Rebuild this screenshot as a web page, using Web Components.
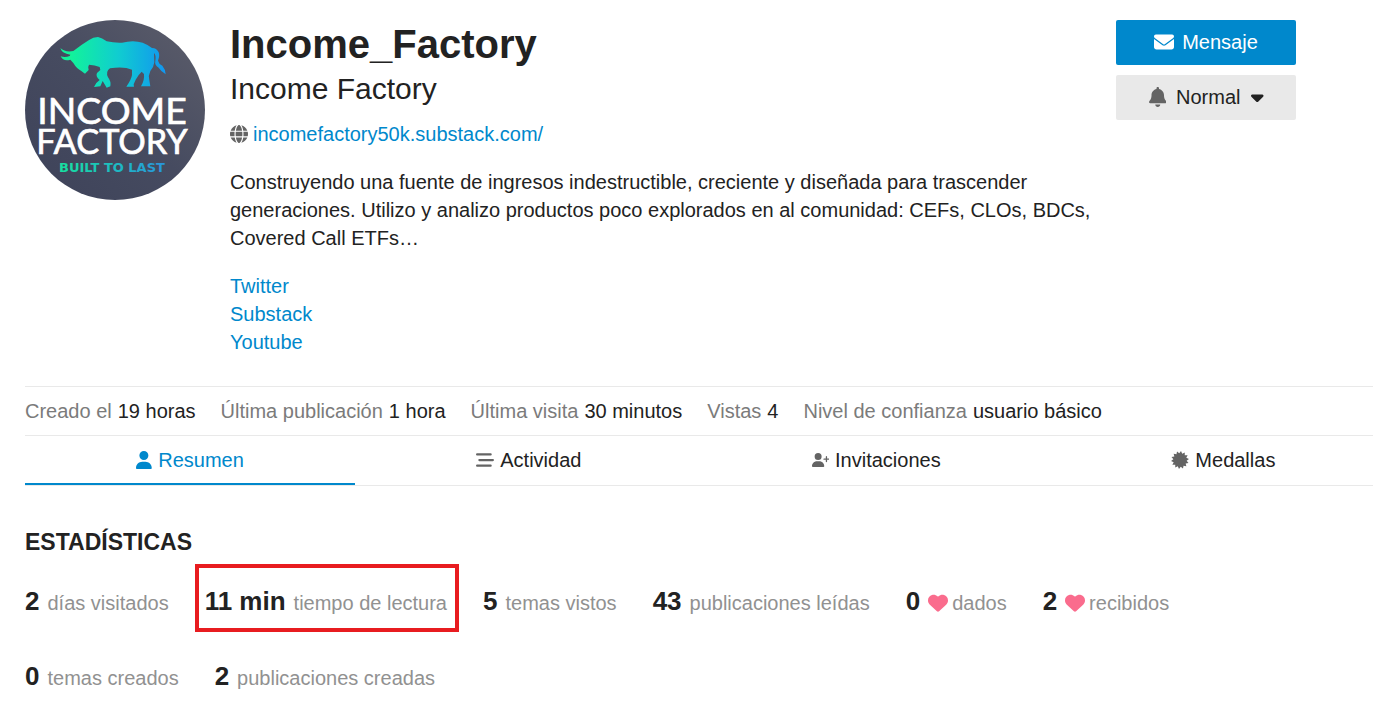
<!DOCTYPE html>
<html lang="es">
<head>
<meta charset="utf-8">
<meta name="viewport" content="width=device-width, initial-scale=1">
<title>Income_Factory - Perfil</title>
<style>
    body {
        margin: 0;
        background: #fff;
        color: #222;
        font: 20px/28px "Liberation Sans", Arial, sans-serif;
        --link: #0088cc;
        --line: #e9e9e9;
        --muted: #919191;
        --icon: #646464;
        overflow-x: hidden;
    }
</style>
</head>
<body>
<user-profile></user-profile>

<script>
// [width of the viewBox, path]
const ICONS = {
    envelope: [512, 'M48 64C21.5 64 0 85.5 0 112c0 15.1 7.1 29.3 19.2 38.4L236.8 313.6c11.4 8.5 27 8.5 38.4 0L492.8 150.4c12.1-9.1 19.2-23.3 19.2-38.4c0-26.5-21.5-48-48-48L48 64zM0 176L0 384c0 35.3 28.7 64 64 64l384 0c35.3 0 64-28.7 64-64l0-208L294.4 339.2c-22.8 17.1-54 17.1-76.8 0L0 176z'],
    bell: [448, 'M224 0c-17.7 0-32 14.3-32 32l0 19.2C119 66 64 130.6 64 208l0 18.8c0 47-17.3 92.4-48.5 127.6l-7.4 8.3c-8.4 9.4-10.4 22.9-5.3 34.4S19.4 416 32 416l384 0c12.6 0 24-7.4 29.2-18.9s3.1-25-5.3-34.4l-7.4-8.3C401.3 319.2 384 273.9 384 226.8l0-18.8c0-77.4-55-142-128-156.8L256 32c0-17.7-14.3-32-32-32zm45.3 493.3c12-12 18.7-28.3 18.7-45.3l-64 0-64 0c0 17 6.7 33.3 18.7 45.3s28.3 18.7 45.3 18.7s33.3-6.7 45.3-18.7z'],
    caret: [320, 'M137.4 374.6c12.5 12.5 32.8 12.5 45.3 0l128-128c9.2-9.2 11.9-22.9 6.9-34.9s-16.6-19.8-29.6-19.8L32 192c-12.9 0-24.6 7.8-29.6 19.8s-2.2 25.7 6.9 34.9l128 128z'],
    user: [448, 'M224 256A128 128 0 1 0 224 0a128 128 0 1 0 0 256zm-45.7 48C79.8 304 0 383.8 0 482.3C0 498.7 13.3 512 29.7 512l388.6 0c16.4 0 29.7-13.3 29.7-29.7C448 383.8 368.2 304 269.7 304l-91.4 0z'],
    'user-plus': [640, 'M96 128a128 128 0 1 1 256 0A128 128 0 1 1 96 128zM0 482.3C0 383.8 79.8 304 178.3 304l91.4 0C368.2 304 448 383.8 448 482.3c0 16.4-13.3 29.7-29.7 29.7L29.7 512C13.3 512 0 498.7 0 482.3zM504 312l0-64-64 0c-13.3 0-24-10.7-24-24s10.7-24 24-24l64 0 0-64c0-13.3 10.7-24 24-24s24 10.7 24 24l0 64 64 0c13.3 0 24 10.7 24 24s-10.7 24-24 24l-64 0 0 64c0 13.3-10.7 24-24 24s-24-10.7-24-24z'],
    stream: [512, 'M32 64h384a32 32 0 0 1 0 64H32a32 32 0 0 1 0-64zM96 224h384a32 32 0 0 1 0 64H96a32 32 0 0 1 0-64zM32 384h384a32 32 0 0 1 0 64H32a32 32 0 0 1 0-64z'],
    heart: [512, 'M47.6 300.4L228.3 469.1c7.5 7 17.4 10.9 27.7 10.9s20.2-3.9 27.7-10.9L464.4 300.4c30.4-28.3 47.6-68 47.6-109.5v-5.8c0-69.9-50.5-129.5-119.4-141C347 36.5 300.6 51.4 268 84L256 96 244 84c-32.6-32.6-79-47.5-124.6-39.9C50.5 55.6 0 115.2 0 185.1v5.8c0 41.5 17.2 81.2 47.6 109.5z'],
    globe: [512, 'M352 256c0 22.2-1.2 43.6-3.3 64l-185.3 0c-2.2-20.4-3.3-41.8-3.3-64s1.2-43.6 3.3-64l185.3 0c2.2 20.4 3.3 41.8 3.3 64zm28.8-64l123.1 0c5.3 20.5 8.1 41.9 8.1 64s-2.8 43.5-8.1 64l-123.1 0c2.1-20.6 3.2-42 3.2-64s-1.1-43.4-3.2-64zm112.6-32l-116.7 0c-10-63.9-29.8-117.4-55.3-151.6c78.3 20.7 142 77.5 171.9 151.6zm-149.1 0l-176.6 0c6.1-36.4 15.5-68.6 27-94.7c10.5-23.6 22.2-40.7 33.5-51.5C239.4 3.2 248.7 0 256 0s16.6 3.2 27.8 13.8c11.3 10.8 23 27.9 33.5 51.5c11.6 26 20.9 58.2 27 94.7zm-209 0L18.6 160C48.6 85.9 112.2 29.1 190.6 8.4C165.1 42.6 145.3 96.1 135.3 160zM8.1 192l123.1 0c-2.1 20.6-3.2 42-3.2 64s1.1 43.4 3.2 64L8.1 320C2.8 299.5 0 278.1 0 256s2.8-43.5 8.1-64zM194.7 446.6c-11.6-26-20.9-58.2-27-94.6l176.6 0c-6.1 36.4-15.5 68.6-27 94.6c-10.5 23.6-22.2 40.7-33.5 51.5C272.6 508.8 263.3 512 256 512s-16.6-3.2-27.8-13.8c-11.3-10.8-23-27.9-33.5-51.5zM135.3 352c10 63.9 29.8 117.4 55.3 151.6C112.2 482.9 48.6 426.1 18.6 352l116.7 0zm358.1 0c-30 74.1-93.6 130.9-171.9 151.6c25.5-34.2 45.2-87.7 55.3-151.6l116.7 0z'],
    certificate: [512, burst(14, 256, 190)]
};

// toothed disc for the badges icon
function burst(teeth, outer, inner) {
    let d = '';
    for (let i = 0; i < teeth * 2; i++) {
        const r = i % 2 ? inner : outer;
        const a = Math.PI * (i + 0.5) / teeth;
        d += (i ? 'L' : 'M') + (256 + r * Math.sin(a)).toFixed(1) + ' ' + (256 - r * Math.cos(a)).toFixed(1);
    }
    return d + 'z';
}

class DIcon extends HTMLElement {
    constructor() {
        super();
        this.attachShadow({ mode: 'open' });
    }

    connectedCallback() {
        const [width, path] = ICONS[this.getAttribute('name')];
        this.shadowRoot.innerHTML = `
            <style>
                :host { display: inline-flex; flex: none; }
                svg { display: block; height: var(--size, 18px); fill: currentColor; }
            </style>
            <svg viewBox="0 0 ${width} 512" aria-hidden="true"><path d="${path}"/></svg>
        `;
    }
}

class UserAvatar extends HTMLElement {
    constructor() {
        super();
        this.attachShadow({ mode: 'open' });
        this.shadowRoot.innerHTML = `
            <style>
                :host { display: block; flex: none; width: 180px; height: 180px; border-radius: 50%; overflow: hidden; }
                svg { display: block; width: 100%; height: 100%; }
                text { font-family: Lato, sans-serif; text-anchor: middle; }
                .name { fill: #fff; stroke: #fff; stroke-width: 2px; font-size: 112px; }
                .small { font-size: 103px; }
                .tag { fill: url(#tag); font: bold 39px "DejaVu Sans", sans-serif; }
            </style>
            <svg viewBox="15 15 540 540" role="img" aria-label="Income Factory">
                <defs>
                    <linearGradient id="back" x1="0" y1="1" x2="1" y2="0">
                        <stop offset="0" stop-color="#3d4259"/>
                        <stop offset=".5" stop-color="#464b60"/>
                        <stop offset="1" stop-color="#5d5e6b"/>
                    </linearGradient>
                    <linearGradient id="bull" gradientUnits="userSpaceOnUse" x1="120" y1="0" x2="436" y2="0">
                        <stop offset=".1" stop-color="#12f39a"/>
                        <stop offset=".55" stop-color="#10cdd0"/>
                        <stop offset="1" stop-color="#1296ef"/>
                    </linearGradient>
                    <linearGradient id="tag" gradientUnits="userSpaceOnUse" x1="95" y1="0" x2="455" y2="0">
                        <stop offset="0" stop-color="#16e69a"/>
                        <stop offset=".5" stop-color="#1cbdc0"/>
                        <stop offset="1" stop-color="#2b8fe0"/>
                    </linearGradient>
                </defs>
                <rect x="15" y="15" width="540" height="540" fill="url(#back)"/>
                <path fill="url(#bull)" d="M121 99Q136 113 160 108Q182 91 206 76Q220 66 234 66Q246 69 260 79Q282 84 306 83Q340 74 368 83Q386 90 396 99Q410 99 416 112Q420 122 414 137Q416 146 427 152Q436 162 437 178Q424 170 416 158Q403 150 406 138Q409 120 402 114L403 142Q401 158 391 168Q384 182 388 196L391 214H363Q374 196 372 177L365 170Q354 180 347 194L341 208L342 215H319Q334 194 336 180L336 164Q312 154 270 160Q256 170 264 187Q274 200 271 214L260 218L248 198L241 214L222 216Q228 202 239 195Q226 184 231 174L241 165L239 156Q225 150 207 149Q202 157 206 165L195 176L184 168Q170 161 160 144L151 134Q130 140 122 124Q136 128 149 123L151 119Q126 116 121 99Z"/>
                <text class="name"><tspan x="276" y="327">INCOME</tspan><tspan class="small" x="276" y="417">FACTORY</tspan></text>
                <text class="tag" x="276" y="471">BUILT TO LAST</text>
            </svg>
        `;
    }
}

class ProfileControls extends HTMLElement {
    constructor() {
        super();
        this.attachShadow({ mode: 'open' });
        this.shadowRoot.innerHTML = `
            <style>
                :host { display: flex; flex-direction: column; flex: none; gap: 10px; width: 180px; --size: 20px; }
                button, label {
                    display: flex;
                    align-items: center;
                    justify-content: center;
                    height: 45px;
                    box-sizing: border-box;
                    padding: 0 0 2px;
                    border: none;
                    border-radius: 2px;
                    cursor: pointer;
                    font: inherit;
                }
                button { gap: 8px; background: var(--link); color: #fff; }
                label { gap: 10px; background: #e9e9e9; }
                select {
                    appearance: none;
                    border: none;
                    padding: 0;
                    background: none;
                    color: inherit;
                    font: inherit;
                }
                .bell { color: var(--icon); }
            </style>
            <button type="button"><d-icon name="envelope"></d-icon>Mensaje</button>
            <label>
                <d-icon class="bell" name="bell"></d-icon>
                <select aria-label="Notificaciones"><option>Normal</option></select>
                <d-icon name="caret"></d-icon>
            </label>
        `;
    }
}

class ProfileHeader extends HTMLElement {
    constructor() {
        super();
        this.attachShadow({ mode: 'open' });
        this.shadowRoot.innerHTML = `
            <style>
                :host { display: flex; align-items: flex-start; padding: 20px 77px 30px 0; }
                .text { flex: 1; min-width: 0; padding: 0 20px 0 25px; }
                h1 { margin: 0; font-size: 40px; line-height: 48px; }
                h2 { margin: 0 0 10px; font-size: 30px; font-weight: normal; line-height: 42px; }
                p { margin: 20px 0 0; }
                a { color: var(--link); text-decoration: none; }
                .site { display: flex; align-items: center; gap: 5px; }
                .site d-icon { color: var(--icon); }
                .links { display: flex; flex-direction: column; align-items: flex-start; }
            </style>
            <user-avatar></user-avatar>
            <div class="text">
                <h1>Income_Factory</h1>
                <h2>Income Factory</h2>
                <div class="site"><d-icon name="globe"></d-icon><a href="#web">incomefactory50k.substack.com/</a></div>
                <p>Construyendo una fuente de ingresos indestructible, creciente y diseñada para trascender generaciones. Utilizo y analizo productos poco explorados en al comunidad: CEFs, CLOs, BDCs, Covered Call ETFs…</p>
                <p class="links">
                    <a href="#twitter">Twitter</a>
                    <a href="#substack">Substack</a>
                    <a href="#youtube">Youtube</a>
                </p>
            </div>
            <profile-controls></profile-controls>
        `;
    }
}

class ProfileDetails extends HTMLElement {
    constructor() {
        super();
        this.attachShadow({ mode: 'open' });
        this.shadowRoot.innerHTML = `
            <style>
                :host { display: block; border: solid var(--line); border-width: 1px 0; }
                dl { display: flex; flex-wrap: wrap; gap: 0 25px; margin: 0; padding: 10px 0; }
                div { display: flex; gap: 6px; }
                dt { color: #7b7b7b; }
                dd { margin: 0; }
            </style>
            <dl>
                <div><dt>Creado el</dt><dd>19 horas</dd></div>
                <div><dt>Última publicación</dt><dd>1 hora</dd></div>
                <div><dt>Última visita</dt><dd>30 minutos</dd></div>
                <div><dt>Vistas</dt><dd>4</dd></div>
                <div><dt>Nivel de confianza</dt><dd>usuario básico</dd></div>
            </dl>
        `;
    }
}

class ProfileTabs extends HTMLElement {
    constructor() {
        super();
        this.attachShadow({ mode: 'open' });
        this.shadowRoot.innerHTML = `
            <style>
                :host { display: block; border-bottom: 1px solid var(--line); }
                /* the last tab runs on past the page edge */
                nav { display: grid; grid-template-columns: 330fr 347fr 347fr 347fr; margin-right: -24px; }
                a {
                    display: flex;
                    align-items: center;
                    justify-content: center;
                    gap: 6px;
                    padding: 10px 0 9px;
                    border-bottom: 2px solid transparent;
                    color: inherit;
                    text-decoration: none;
                }
                d-icon { color: var(--icon); }
                d-icon[name="user-plus"] { --size: 14px; }
                a[aria-current] { color: var(--link); border-color: var(--link); }
                a[aria-current] d-icon { color: inherit; }
            </style>
            <nav>
                <a href="#resumen" aria-current="page"><d-icon name="user"></d-icon>Resumen</a>
                <a href="#actividad"><d-icon name="stream"></d-icon>Actividad</a>
                <a href="#invitaciones"><d-icon name="user-plus"></d-icon>Invitaciones</a>
                <a href="#medallas"><d-icon name="certificate"></d-icon>Medallas</a>
            </nav>
        `;
    }
}

class UserStat extends HTMLElement {
    constructor() {
        super();
        this.attachShadow({ mode: 'open' });
    }

    connectedCallback() {
        const heart = this.hasAttribute('heart') ? '<d-icon name="heart"></d-icon>' : '';
        this.shadowRoot.innerHTML = `
            <style>
                :host { display: flex; align-items: baseline; gap: 8px; position: relative; line-height: 39px; }
                .value { font-size: 26px; font-weight: bold; }
                .label { display: flex; align-items: baseline; gap: 4px; color: var(--muted); line-height: 28px; }
                d-icon { align-self: center; color: #fa6c8d; --size: 20px; }
                :host([marked])::after {
                    content: "";
                    position: absolute;
                    inset: -18px -12px -11px -10px;
                    border: 4px solid #e81c20;
                }
            </style>
            <span class="value">${this.getAttribute('value')}</span>
            <span class="label">${heart}<span><slot></slot></span></span>
        `;
    }
}

class ProfileStats extends HTMLElement {
    constructor() {
        super();
        this.attachShadow({ mode: 'open' });
        this.shadowRoot.innerHTML = `
            <style>
                :host { display: block; padding: 42px 77px 0 0; }
                h3 { margin: 0 0 26px; font-size: 23px; line-height: 28px; text-transform: uppercase; }
                ul { display: flex; flex-wrap: wrap; gap: 36px; margin: 0; padding: 0; list-style: none; }
            </style>
            <h3>Estadísticas</h3>
            <ul>
                <li><user-stat value="2">días visitados</user-stat></li>
                <li><user-stat value="11 min" marked>tiempo de lectura</user-stat></li>
                <li><user-stat value="5">temas vistos</user-stat></li>
                <li><user-stat value="43">publicaciones leídas</user-stat></li>
                <li><user-stat value="0" heart>dados</user-stat></li>
                <li><user-stat value="2" heart>recibidos</user-stat></li>
                <li><user-stat value="0">temas creados</user-stat></li>
                <li><user-stat value="2">publicaciones creadas</user-stat></li>
            </ul>
        `;
    }
}

class UserProfile extends HTMLElement {
    constructor() {
        super();
        this.attachShadow({ mode: 'open' });
        this.shadowRoot.innerHTML = `
            <style>
                :host { display: block; padding-left: 25px; overflow: hidden; }
            </style>
            <profile-header></profile-header>
            <profile-details></profile-details>
            <profile-tabs></profile-tabs>
            <profile-stats></profile-stats>
        `;
    }
}

customElements.define('d-icon', DIcon);
customElements.define('user-avatar', UserAvatar);
customElements.define('profile-controls', ProfileControls);
customElements.define('profile-header', ProfileHeader);
customElements.define('profile-details', ProfileDetails);
customElements.define('profile-tabs', ProfileTabs);
customElements.define('user-stat', UserStat);
customElements.define('profile-stats', ProfileStats);
customElements.define('user-profile', UserProfile);
</script>
</body>
</html>
